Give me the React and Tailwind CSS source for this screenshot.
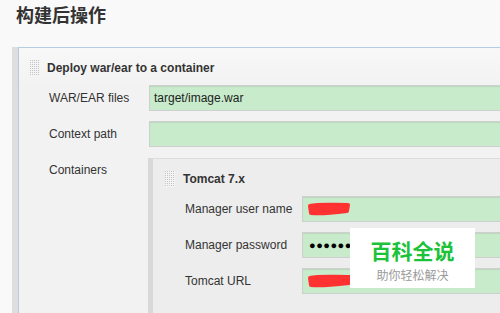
import React from "react";

const font = { fontFamily: '"Liberation Sans", Arial, "Noto Sans CJK SC", sans-serif' };

function DragHandle() {
  const dots = [];
  for (let y = 0; y < 8; y++) {
    for (let x = 0; x < 5; x++) {
      dots.push(<rect key={`${x}-${y}`} x={x * 2} y={y * 2} width="1" height="1" fill="#c4c4c4" />);
    }
  }
  return (
    <svg width="10" height="16" viewBox="0 0 10 16" className="shrink-0">
      <rect x="0" y="0" width="10" height="16" fill="#f4f4f4" />
      {dots}
    </svg>
  );
}

// hand drawn red marker used to hide the values
function Scribble({ w = 44 }) {
  return (
    <svg width={w} height="16" viewBox={`0 0 ${w} 16`} className="shrink-0">
      <path
        d={`M3 5 C 12 3, 24 4, ${w - 3} 4 L ${w - 4} 10 C 24 12, 12 13, 4 12 Z`}
        fill="#ff3232"
        stroke="#ff3232"
        strokeWidth="4"
        strokeLinejoin="round"
      />
    </svg>
  );
}

function Field({ children }) {
  return (
    <div className="flex h-[26px] flex-1 items-center border border-[#cfcfcf] bg-[#c8ebcb] pl-[4px] text-[12px] text-[#222] shadow-[inset_0_1px_1px_rgba(0,0,0,0.08)]">
      {children}
    </div>
  );
}

function Row({ label, labelWidth, pad, children }) {
  return (
    <div className="flex items-center">
      <div className="shrink-0 text-[12px] text-[#333]" style={{ width: labelWidth, paddingLeft: pad }}>
        {label}
      </div>
      <Field>{children}</Field>
    </div>
  );
}

export default function App() {
  return (
    <div className="relative h-[313px] w-[500px] overflow-hidden bg-[#f9f9f9]" style={font}>
      <h1 className="h-[47px] pl-[16px] pt-[4px] text-[18px] font-bold leading-[24px] text-[#333]">构建后操作</h1>

      <div className="ml-[12px] flex w-[560px]">
        <div className="w-[6px] shrink-0 bg-[#dedede]" />
        <div className="flex-1 border-l border-t border-[#b3cbe3] bg-gradient-to-b from-[#f8f8f8] to-[#f2f2f2] to-[40px]">
          <div className="flex h-[37px] items-center gap-[7px] pl-[11px] pt-[2px]">
            <DragHandle />
            <span className="text-[12px] font-bold text-[#333]">Deploy war/ear to a container</span>
          </div>

          <div className="flex flex-col gap-[10px]">
            <Row label="WAR/EAR files" labelWidth={130} pad={30}>target/image.war</Row>
            <Row label="Context path" labelWidth={130} pad={30} />
          </div>

          <div className="mt-[11px] flex">
            <div className="w-[129px] shrink-0 pl-[30px] pt-[3px] text-[12px] text-[#333]">Containers</div>
            <div className="flex flex-1">
              <div className="w-[5px] shrink-0 bg-[#d9d9d9]" />
              <div className="flex-1 border-t border-[#dcdcdc] bg-[#ededed] pb-[20px]">
                <div className="flex h-[37px] items-center gap-[8px] pl-[12px] pt-[2px]">
                  <DragHandle />
                  <span className="text-[12px] font-bold text-[#333]">Tomcat 7.x</span>
                </div>
                <div className="flex flex-col gap-[10px]">
                  <Row label="Manager user name" labelWidth={149} pad={32}>
                    <Scribble w={44} />
                  </Row>
                  <Row label="Manager password" labelWidth={149} pad={32}>
                    <span className="pl-[2px] text-[11px] tracking-[0.5px] text-black">●●●●●●●●</span>
                  </Row>
                  <Row label="Tomcat URL" labelWidth={149} pad={32}>
                    <Scribble w={46} />
                  </Row>
                </div>
              </div>
            </div>
          </div>
        </div>
      </div>

      <div
        className="absolute left-[350px] top-[228px] flex h-[60px] w-[125px] flex-col items-center bg-white pt-[9px]"
        style={{ fontFamily: '"Noto Sans CJK SC", sans-serif' }}
      >
        <div className="text-[21px] font-bold leading-[26px] text-[#1cc23a]">百科全说</div>
        <div className="mt-[4px] text-[12px] leading-[16px] text-[#9a9a9a]">助你轻松解决</div>
      </div>
    </div>
  );
}
